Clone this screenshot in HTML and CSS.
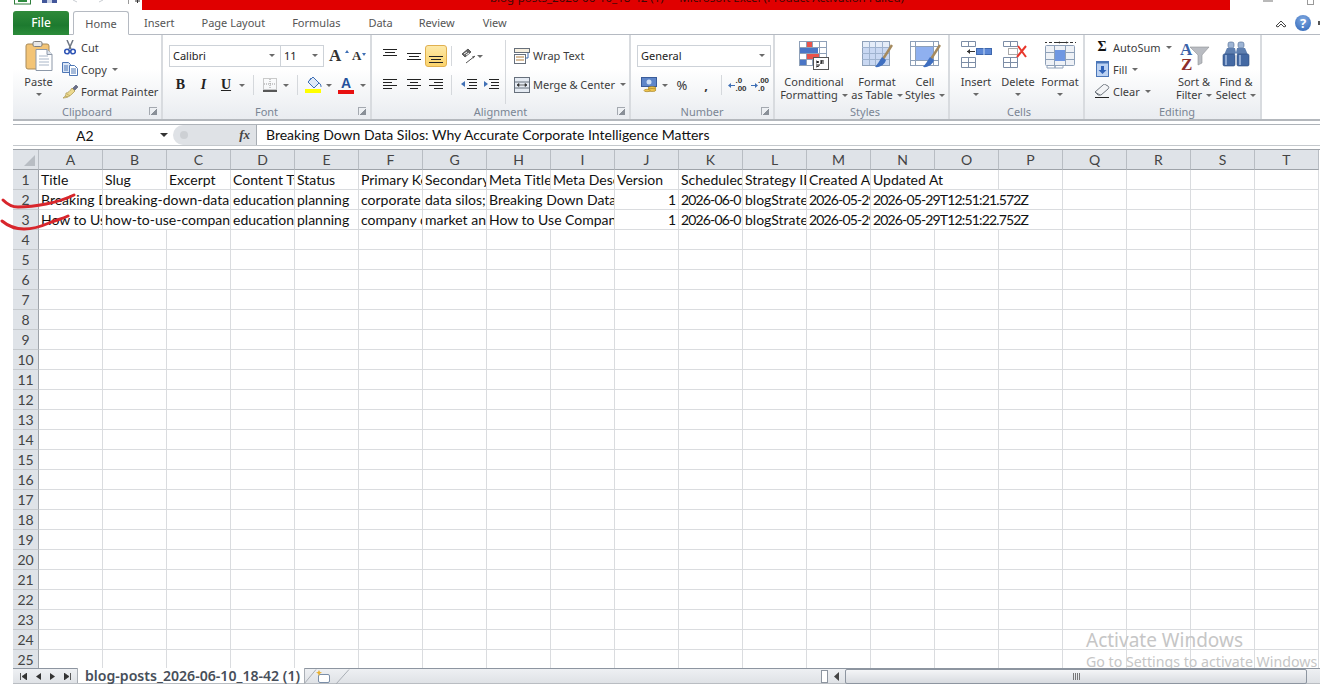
FILE: index.html
```html
<!DOCTYPE html>
<html lang="en">
<head>
    <meta charset="UTF-8">
    <title>blog-posts_2026-06-10_18-42 (1) - Microsoft Excel</title>
    <link rel="stylesheet" href="styles.css">
</head>
<body>
    <!-- title bar, cut off at the top of the capture -->
    <div class="titlebar">
        <div class="quick-access">
            <svg class="qa-excel" width="17" height="5"><rect x="0.5" y="-5" width="16" height="9" fill="#fff" stroke="#2f7d3b"/><rect x="4" y="-4" width="9" height="6" fill="#2e8b3e"/></svg>
            <svg class="qa-save" width="15" height="4"><rect width="15" height="3" fill="#43579a"/><rect x="5" width="5" height="3" fill="#c9d2e6"/></svg>
            <svg class="qa-undo" width="7" height="3"><path d="M1 0l4 2" stroke="#c9cdd2" fill="none"/></svg>
            <svg class="qa-redo" width="7" height="3"><path d="M6 0L2 2" stroke="#c9cdd2" fill="none"/></svg>
            <span class="qa-sep"></span>
            <svg class="qa-more" width="5" height="3"><path d="M0 1h5M2.500 0v3" stroke="#333"/></svg>
        </div>
        <div class="title-red"><span>blog-posts_2026-06-10_18-42 (1)&nbsp; -&nbsp; Microsoft Excel (Product Activation Failed)</span></div>
        <div class="win-controls">
            <span class="win-min"></span>
            <span class="win-max"></span>
        </div>
    </div>

    <!-- ribbon tabs -->
    <div class="tabs">
        <div class="tab-file">File</div>
        <div class="tab-home">Home</div>
        <div class="tab tab-insert">Insert</div>
        <div class="tab tab-layout">Page Layout</div>
        <div class="tab tab-formulas">Formulas</div>
        <div class="tab tab-data">Data</div>
        <div class="tab tab-review">Review</div>
        <div class="tab tab-view">View</div>
        <div class="tabs-right">
            <svg width="13" height="10"><path d="M1 8l5-5 5 5-2 1-3-3-3 3z" fill="#fff" stroke="#444"/></svg>
            <div class="help">?</div>
            <span class="help-edge"></span>
        </div>
    </div>

    <!-- ribbon -->
    <div class="ribbon">
        <div class="group group-clipboard">
            <div class="group-body">
                <div class="big-btn paste-btn">
                    <div class="big-icon">
                        <svg width="28" height="31" viewBox="0 0 28 31"><rect x="1" y="3" width="23" height="25" rx="2" fill="#f3c476" stroke="#a98a58"/><rect x="8" y="0.500" width="9" height="5" rx="1.500" fill="#e8e8e8" stroke="#7f7f7f"/><path d="M11 8.500h11l5 5v16H11z" fill="#fff" stroke="#8d98a8"/><path d="M22 8.500v5h5" fill="#dfe5ee" stroke="#8d98a8"/><path d="M14 15h9M14 18h10M14 21h10M14 24h10" stroke="#a9b6c8"/></svg>
                    </div>
                    <div class="big-text">Paste</div>
                    <i class="caret caret-line"></i>
                </div>
                <div class="small-col">
                    <div class="small-btn">
                        <span class="small-icon"><svg width="12" height="15" viewBox="0 0 12 15"><path d="M3 0l4 9M9 0L5 9" stroke="#6e7683" stroke-width="1.500" fill="none"/><circle cx="3" cy="11.500" r="2.300" fill="#fff" stroke="#2f55b5" stroke-width="1.600"/><circle cx="9" cy="11.500" r="2.300" fill="#fff" stroke="#2f55b5" stroke-width="1.600"/></svg></span>
                        <span>Cut</span>
                    </div>
                    <div class="small-btn">
                        <span class="small-icon"><svg width="16" height="14" viewBox="0 0 16 14"><path d="M.5.500h6l2 2v8h-8z" fill="#dbe6f6" stroke="#4d76b5"/><path d="M7.500 3.500h5l3 3v7h-8z" fill="#fff" stroke="#4d76b5"/><path d="M2 4h4M2 6h4M2 8h4M9 7h5M9 9h5M9 11h5" stroke="#4d76b5"/></svg></span>
                        <span>Copy</span><i class="caret"></i>
                    </div>
                    <div class="small-btn">
                        <span class="small-icon"><svg width="17" height="15" viewBox="0 0 17 15"><path d="M10 5l4-4 2 2-4 4z" fill="#6a6f8a" stroke="#4e5268" stroke-width=".6"/><path d="M10 4l3 3-3 3c-2 2-5 4-9 4 2-1 3-3 3-5 2 0 4-2 6-5z" fill="#ecd98f" stroke="#a8944e" stroke-width=".7"/><path d="M5 10l3 2M3 12l3 1" stroke="#a8944e" stroke-width=".6"/></svg></span>
                        <span>Format Painter</span>
                    </div>
                </div>
            </div>
            <div class="group-label">Clipboard</div>
            <i class="launcher"></i>
        </div>

        <div class="group group-font">
            <div class="group-body stack">
                <div class="row-top">
                    <div class="select font-name"><span>Calibri</span><i class="caret"></i></div>
                    <div class="select font-size"><span>11</span><i class="caret"></i></div>
                    <div class="grow-a">A<i></i></div>
                    <div class="shrink-a">A<i></i></div>
                </div>
                <div class="row-bottom font-tools">
                    <b class="fmt fmt-b">B</b>
                    <i class="fmt fmt-i">I</i>
                    <u class="fmt fmt-u">U</u>
                    <i class="caret"></i>
                    <span class="sep"></span>
                    <svg width="14" height="14"><rect x=".5" y=".5" width="13" height="11" fill="none" stroke="#999" stroke-dasharray="1 1"/><path d="M7 1v10M1 6h12" stroke="#999" stroke-dasharray="1 1"/><path d="M0 13h14" stroke="#222" stroke-width="1.500"/></svg>
                    <i class="caret"></i>
                    <span class="sep"></span>
                    <svg width="17" height="16" viewBox="0 0 17 16"><path d="M8 0l6 6-5 5-6-6z" fill="#dfe9f7" stroke="#3f6fb5"/><path d="M6 1L4 4M14 6c2 1 2 3 2 4" stroke="#3f6fb5" fill="none"/><rect y="12" width="16" height="4" fill="#ffff00"/></svg>
                    <i class="caret"></i>
                    <div class="color-a">A</div>
                    <i class="caret"></i>
                </div>
            </div>
            <div class="group-label">Font</div>
            <i class="launcher"></i>
        </div>

        <div class="group group-align">
            <div class="group-body split">
                <div class="align-left stack">
                    <div class="row-top align-tools">
                        <svg class="lines" width="14" height="14"><path d="M0 .5h14M2 3.500h10M0 6.500h14"/></svg>
                        <svg class="lines" width="14" height="14"><path d="M0 4.500h14M2 7.500h10M0 10.500h14"/></svg>
                        <div class="align-on"><svg class="lines" width="14" height="8"><path d="M0 1.500h14M2 4.500h10M0 7.500h14"/></svg></div>
                        <span class="sep"></span>
                        <div class="orient">
                            <svg width="16" height="16" viewBox="0 0 16 16"><path d="M1 6l6-5 3 3-6 5z" fill="#666" stroke="#333" stroke-width=".7"/><path d="M3 6l3-2M5 7l3-2" stroke="#fff"/><path d="M5 15l9-7" stroke="#555"/><path d="M14 8l-3 .5 1.500 2z" fill="#555"/></svg>
                            <i class="caret"></i>
                        </div>
                    </div>
                    <div class="row-bottom align-tools">
                        <svg class="lines" width="14" height="12"><path d="M0 .5h14M0 3.500h9M0 6.500h14M0 9.500h9"/></svg>
                        <svg class="lines" width="14" height="12"><path d="M0 .5h14M3 3.500h8M0 6.500h14M3 9.500h8"/></svg>
                        <svg class="lines" width="14" height="12"><path d="M0 .5h14M5 3.500h9M0 6.500h14M5 9.500h9"/></svg>
                        <span class="sep"></span>
                        <div class="indents">
                            <svg class="lines" width="16" height="14"><path d="M6 1.500h10M8 4.500h8M8 7.500h8M6 10.500h10"/><path class="arrow" d="M0 6l4-3v6z"/></svg>
                            <svg class="lines" width="16" height="14"><path d="M6 1.500h10M8 4.500h8M8 7.500h8M6 10.500h10"/><path class="arrow" d="M5 6L1 3v6z"/></svg>
                        </div>
                    </div>
                </div>
                <div class="align-right stack">
                    <div class="row-top wide-btn">
                        <svg width="16" height="16" viewBox="0 0 16 16"><rect x=".5" y=".5" width="15" height="4" fill="#f6efdf" stroke="#67707c"/><rect x=".5" y="6.500" width="11" height="9" fill="#fff" stroke="#67707c"/><path d="M2 9h8M2 12h8" stroke="#b07d3b"/><path d="M14 5v5h-2" fill="none" stroke="#3f6fb5"/></svg>
                        <span>Wrap Text</span>
                    </div>
                    <div class="row-bottom wide-btn">
                        <svg width="16" height="16" viewBox="0 0 16 16"><rect x=".5" y=".5" width="15" height="15" fill="#e5ebf3" stroke="#67707c"/><path d="M0 5h16M0 11h16" stroke="#67707c"/><path d="M3 8h10M3 8l2-1.500v3zM13 8l-2-1.500v3z" stroke="#333" fill="#333" stroke-width=".7"/></svg>
                        <span>Merge &amp; Center</span><i class="caret caret-merge"></i>
                    </div>
                </div>
            </div>
            <div class="group-label">Alignment</div>
            <i class="launcher"></i>
        </div>

        <div class="group group-number">
            <div class="group-body stack">
                <div class="row-top">
                    <div class="select number-format"><span>General</span><i class="caret"></i></div>
                </div>
                <div class="row-bottom number-tools">
                    <svg width="16" height="16" viewBox="0 0 16 16"><rect x=".5" y=".5" width="15" height="9" fill="#5f86c9" stroke="#3a5c9a"/><circle cx="8" cy="5" r="2.500" fill="#cfe0f6"/><ellipse cx="11" cy="11" rx="4" ry="1.500" fill="#efc44d" stroke="#9c7a20" stroke-width=".6"/><ellipse cx="11" cy="13" rx="4" ry="1.500" fill="#efc44d" stroke="#9c7a20" stroke-width=".6"/><ellipse cx="6" cy="13.500" rx="3" ry="1.200" fill="#efc44d" stroke="#9c7a20" stroke-width=".6"/></svg>
                    <i class="caret"></i>
                    <span class="num-sym">%</span>
                    <b class="num-sym">,</b>
                    <span class="sep"></span>
                    <div class="dec">
                        <svg width="7" height="7"><path class="arrow" d="M0 3.500L3 1v5z"/><path d="M3 3.500h4" stroke="#3f6fb5"/></svg>
                        <span>.0<br>.00</span>
                    </div>
                    <div class="dec">
                        <svg width="7" height="7"><path class="arrow" d="M7 3.500L4 1v5z"/><path d="M0 3.500h4" stroke="#3f6fb5"/></svg>
                        <span>.00<br>.0</span>
                    </div>
                </div>
            </div>
            <div class="group-label">Number</div>
            <i class="launcher"></i>
        </div>

        <div class="group group-styles">
            <div class="group-body">
                <div class="big-btn btn-cond">
                    <div class="big-icon">
                        <svg width="31" height="29" viewBox="0 0 31 29"><rect x=".5" y=".5" width="27" height="24" fill="#fff" stroke="#8ea0b8"/><path d="M0 6.500h27M0 12.500h27M0 18.500h27M7.500 0v24M13.500 0v24M20.500 0v24" stroke="#8ea0b8"/><rect x="8" y="1" width="5" height="5" fill="#e8534b"/><rect x="1" y="7" width="18" height="5" fill="#4a76c6"/><rect x="8" y="13" width="12" height="5" fill="#e8534b"/><rect x="1" y="19" width="6" height="5" fill="#4a76c6"/><rect x="14.500" y="16.500" width="15" height="12" fill="#fff" stroke="#555"/><path d="M17 20l3 1-3 1M17 24h4M23 19l-1 4M21 20h4M21 22h4M17 26l3-1" stroke="#222" fill="none"/></svg>
                    </div>
                    <div class="big-text">Conditional<br>Formatting<i class="caret"></i></div>
                </div>
                <div class="big-btn btn-table">
                    <div class="big-icon">
                        <svg width="31" height="29" viewBox="0 0 31 29"><rect x=".5" y=".5" width="27" height="24" fill="#c9d8f2" stroke="#8ea0b8"/><rect x="1" y="1" width="26" height="5" fill="#e5edf9"/><path d="M0 6.500h27M0 12.500h27M0 18.500h27M7.500 0v24M13.500 0v24M20.500 0v24" stroke="#9fb3cf"/><path d="M30 4l-9 14" stroke="#a58a5e" stroke-width="2.500"/><path d="M20 16c-2 3-5 8-7 10 5 1 10-3 11-7z" fill="#3f6fc0"/></svg>
                    </div>
                    <div class="big-text">Format<br>as Table<i class="caret"></i></div>
                </div>
                <div class="big-btn btn-cell">
                    <div class="big-icon">
                        <svg width="31" height="29" viewBox="0 0 31 29"><rect x=".5" y=".5" width="28" height="24" fill="#fff" stroke="#8ea0b8"/><path d="M0 5.500h28M0 19.500h28M5.500 0v24M23.500 0v24" stroke="#8ea0b8"/><rect x="6" y="6" width="17" height="13" fill="#8fb0ef"/><path d="M30 4l-9 14" stroke="#a58a5e" stroke-width="2.500"/><path d="M20 16c-2 3-5 8-7 10 5 1 10-3 11-7z" fill="#3f6fc0"/></svg>
                    </div>
                    <div class="big-text">Cell<br>Styles<i class="caret"></i></div>
                </div>
            </div>
            <div class="group-label">Styles</div>
        </div>

        <div class="group group-cells">
            <div class="group-body">
                <div class="big-btn">
                    <div class="big-icon">
                        <svg width="31" height="27" viewBox="0 0 31 27"><path d="M.5.500h14v5H.5zM.5 16.500h14v10H.5zM.5 21.500h14M7.500 16v11M7.500 0v6" fill="#fff" stroke="#7c8da6"/><rect x="15.500" y="7.500" width="15" height="6" fill="#5b87d6" stroke="#3f68ad"/><path d="M23 7v7" stroke="#cfe0f6"/><path d="M6 10.500h8" stroke="#333"/><path d="M6 10.500l3-2.500v5z" fill="#333"/></svg>
                    </div>
                    <div class="big-text">Insert</div>
                    <i class="caret caret-line"></i>
                </div>
                <div class="big-btn">
                    <div class="big-icon">
                        <svg width="31" height="27" viewBox="0 0 31 27"><path d="M.5.500h14v5H.5zM.5 16.500h14v10H.5zM.5 21.500h14M7.500 16v11M7.500 0v6" fill="#fff" stroke="#7c8da6"/><rect x="5.500" y="7.500" width="9" height="6" fill="#fff" stroke="#555" stroke-dasharray="1 1"/><path d="M15 5l8 11M23 5l-9 11" stroke="#e8372c" stroke-width="2"/></svg>
                    </div>
                    <div class="big-text">Delete</div>
                    <i class="caret caret-line"></i>
                </div>
                <div class="big-btn">
                    <div class="big-icon">
                        <svg width="31" height="28" viewBox="0 0 31 28"><path d="M0 1.500h2M4 1.500h3M9 1.500h14M25 1.500h3M30 1.500h1" stroke="#333"/><path d="M12 1.500l3-1v2zM24 1.500l-3-1v2z" fill="#333"/><rect x=".5" y="4.500" width="29" height="20" rx="1" fill="#eef1f6" stroke="#8ea0b8"/><path d="M0 11.500h29M0 18.500h29M9.500 4v20M20.500 4v20" stroke="#8ea0b8"/><rect x="10" y="9" width="10" height="11" fill="#6f97e2"/><path d="M2 25v2h8v-2M10 25v2h8v-2" fill="none" stroke="#8ea0b8"/></svg>
                    </div>
                    <div class="big-text">Format</div>
                    <i class="caret caret-line"></i>
                </div>
            </div>
            <div class="group-label">Cells</div>
        </div>

        <div class="group group-editing">
            <div class="group-body">
                <div class="small-col edit-col">
                    <div class="small-btn">
                        <span class="small-icon sigma">Σ</span>
                        <span>AutoSum</span><i class="caret"></i>
                    </div>
                    <div class="small-btn">
                        <span class="small-icon"><svg width="13" height="16" viewBox="0 0 13 16"><rect x=".5" y=".5" width="12" height="15" fill="#bcd2f2" stroke="#4a76b8"/><path d="M.5.500h12v2H.5z" fill="#4a76b8"/><path d="M5 5h3v4h2.500l-4 4-4-4H5z" fill="#2f62b8"/></svg></span>
                        <span>Fill</span><i class="caret"></i>
                    </div>
                    <div class="small-btn">
                        <span class="small-icon"><svg width="16" height="14" viewBox="0 0 16 14"><path d="M1 8l8-7c1-1 2-1 3 0l2 1c1 1 1 2 0 3l-7 6H4z" fill="#f3f4f6" stroke="#717880"/><path d="M1 8l5 3" stroke="#717880"/><path d="M1 13.500h14" stroke="#222"/></svg></span>
                        <span>Clear</span><i class="caret"></i>
                    </div>
                </div>
                <div class="big-btn btn-sort">
                    <div class="big-icon">
                        <svg width="31" height="30" viewBox="0 0 31 30"><path d="M11 6h19l-7 8v8l-4 2V14z" fill="#b9bcc2" stroke="#8e9196" stroke-width=".6"/><text x="1" y="14" class="sort-a">A</text><text x="2" y="29" class="sort-z">Z</text></svg>
                    </div>
                    <div class="big-text">Sort &amp;<br>Filter<i class="caret"></i></div>
                </div>
                <div class="big-btn btn-find">
                    <div class="big-icon">
                        <svg width="28" height="26" viewBox="0 0 28 26"><rect x="6" y="1" width="6" height="6" rx="2" fill="#9db4d4" stroke="#4d6890" stroke-width=".6"/><rect x="16" y="1" width="6" height="6" rx="2" fill="#9db4d4" stroke="#4d6890" stroke-width=".6"/><path d="M5 7h8l1 5-2 2H2z" fill="#5e7fb0"/><path d="M15 7h8l3 7H16l-2-2z" fill="#5e7fb0"/><rect x="1" y="13" width="12" height="12" rx="1.500" fill="#4469a3" stroke="#2c4a7c" stroke-width=".6"/><rect x="15" y="13" width="12" height="12" rx="1.500" fill="#4469a3" stroke="#2c4a7c" stroke-width=".6"/><path d="M4 14v10M18 14v10" stroke="#a7bfe2" stroke-width="1.500"/></svg>
                    </div>
                    <div class="big-text">Find &amp;<br>Select<i class="caret"></i></div>
                </div>
            </div>
            <div class="group-label">Editing</div>
        </div>
    </div>

    <!-- formula bar -->
    <div class="formula-bar">
        <div class="name-box"><span>A2</span><i class="caret"></i></div>
        <div class="fx-box">
            <span class="fx-knob"></span>
            <span class="fx">fx</span>
        </div>
        <div class="formula-input">Breaking Down Data Silos: Why Accurate Corporate Intelligence Matters</div>
    </div>

    <!-- sheet -->
    <div class="sheet">
        <table id="grid" class="grid"></table>
        <div class="watermark">
            <div class="wm-big">Activate Windows</div>
            <div class="wm-small">Go to Settings to activate Windows</div>
        </div>
    </div>

    <!-- sheet tabs and horizontal scrollbar -->
    <div class="tabbar">
        <div class="tab-nav">
            <svg width="7" height="7"><path d="M.5 0v7M7 0L2 3.500 7 7z" stroke="#333" fill="#333" stroke-width=".8"/></svg>
            <svg width="5" height="7"><path d="M5 0L0 3.500 5 7z" fill="#333"/></svg>
            <svg width="5" height="7"><path d="M0 0l5 3.500L0 7z" fill="#333"/></svg>
            <svg width="7" height="7"><path d="M6.500 0v7M0 0l5 3.500L0 7z" stroke="#333" fill="#333" stroke-width=".8"/></svg>
        </div>
        <div class="sheet-tab">blog-posts_2026-06-10_18-42 (1)</div>
        <svg class="new-tab" width="48" height="15" viewBox="0 0 48 15"><path d="M0 15L12 .5M32 15L45 .5" fill="none" stroke="#a9aeb5"/><rect x="14.500" y="5.500" width="11" height="8" rx="1.500" fill="#fff" stroke="#7a8ea8"/><path d="M15 1l1 2 2 .5-2 1-1 2.500-1-2.500-2-1 2-.5z" fill="#eab12f"/></svg>
        <div class="hscroll">
            <div class="splitter"></div>
            <svg class="scroll-left" width="5" height="9"><path d="M5 0L0 4.500 5 9z" fill="#444"/></svg>
            <div class="thumb"><span class="grip"></span></div>
        </div>
    </div>

    <!-- red pen marks over the row numbers -->
    <svg class="pen-marks" width="90" height="60" viewBox="0 0 90 60">
        <path d="M3 8c4 4 8 7 15 7 9 0 18-1 28-3 10-2 20-5 28-9"/>
        <path d="M2 29c6 5 12 8 22 8 8 0 16-2 25-6 7-3 13-4 19-7"/>
    </svg>

    <script>
        // 表を組み立てる (null = 左のセルの文字がはみ出す列)
        const columns = 'ABCDEFGHIJKLMNOPQRST'.split('');
        const rowCount = 26;
        const stampColumns = ['K', 'M', 'N'];
        const cells = {
            1: ['Title', 'Slug', 'Excerpt', 'Content Type', 'Status', 'Primary Keyword', 'Secondary Keywords', 'Meta Title', 'Meta Description', 'Version', 'Scheduled At', 'Strategy ID', 'Created At', 'Updated At', null],
            2: ['Breaking Down Data Silos', 'breaking-down-data-silos', null, 'educational', 'planning', 'corporate intelligence', 'data silos; intelligence', 'Breaking Down Data Silos', null, 1, '2026-06-01', 'blogStrategy', '2026-05-29', '2026-05-29T12:51:21.572Z', null, null],
            3: ['How to Use Company Data', 'how-to-use-company-data', null, 'educational', 'planning', 'company data', 'market analysis', 'How to Use Company Data', null, 1, '2026-06-01', 'blogStrategy', '2026-05-29', '2026-05-29T12:51:22.752Z', null, null]
        };

        let html = '<tr><th class="corner"><i></i></th>';
        columns.forEach(col => { html += `<th>${col}</th>`; });
        html += '</tr>';

        for (let r = 1; r < rowCount; r++) {
            const row = cells[r] || [];
            html += `<tr><th class="row-head">${r}</th>`;
            columns.forEach((col, i) => {
                if (row[i] === null) return;
                const value = row[i] === undefined ? '' : row[i];
                let span = 1;
                while (row[i + span] === null) span++;
                let cls = '';
                if (typeof value === 'number') cls = 'num';
                else if (r > 1 && stampColumns.includes(col)) cls = 'stamp';
                html += `<td class="${cls}" colspan="${span}"><div>${value}</div></td>`;
            });
            html += '</tr>';
        }
        document.getElementById('grid').innerHTML = html;
    </script>
</body>
</html>
```

FILE: styles.css
```css
* {
    box-sizing: border-box;
    margin: 0;
    padding: 0;
}

body {
    width: 1320px;
    height: 686px;
    overflow: hidden;
    background-color: #fff;
    font-family: "Noto Sans", Arial, sans-serif;
    font-size: 11px;
    color: #3c3c3c;
    position: relative;
}

svg {
    display: block;
    flex: none;
}

/* title bar */
.titlebar {
    height: 11px;
    display: flex;
    overflow: hidden;
}

.quick-access {
    width: 142px;
    display: flex;
    align-items: flex-start;
    padding-left: 14px;
}

.qa-save { margin-left: 11px; }
.qa-undo { margin-left: 15px; }
.qa-redo { margin-left: 18px; }

.qa-sep {
    width: 1px;
    height: 4px;
    margin-left: 24px;
    background-color: #999;
}

.qa-more { margin-left: 6px; }

.title-red {
    width: 1088px;
    height: 10px;
    background-color: #e00000;
    padding-left: 348px;
    overflow: hidden;
}

.title-red span {
    display: block;
    margin-top: -11px;
    font-size: 11.500px;
    line-height: 18px;
    color: #3c0808;
    white-space: nowrap;
}

.win-controls {
    flex: 1;
    position: relative;
}

.win-min {
    display: block;
    width: 10px;
    height: 2px;
    margin: 0 0 0 33px;
    background-color: #b9b9b9;
}

.win-max {
    position: absolute;
    left: 77px;
    top: -2px;
    width: 7px;
    height: 7px;
    border: 1px solid #999;
}

/* ribbon tabs */
.tabs {
    height: 24px;
    margin-left: 13px;
    display: flex;
    position: relative;
    border-bottom: 1px solid #b5bac2;
}

.tab-file {
    width: 56px;
    height: 24px;
    border-radius: 3px 3px 0 0;
    background: linear-gradient(#2f8a3a, #1d7a2f 60%, #2b8c3a);
    color: #fff;
    font-size: 12px;
    font-weight: 500;
    line-height: 24px;
    text-align: center;
}

.tab-home {
    width: 56px;
    height: 24px;
    margin-left: 4px;
    background-color: #fff;
    border: 1px solid #b5bac2;
    border-bottom-color: #fff;
    border-radius: 3px 3px 0 0;
    line-height: 23px;
    text-align: center;
    color: #555;
}

.tab {
    line-height: 24px;
    color: #555;
}

.tab-insert { margin-left: 15px; }
.tab-layout { margin-left: 27px; }
.tab-formulas { margin-left: 27px; }
.tab-data { margin-left: 28px; }
.tab-review { margin-left: 26px; }
.tab-view { margin-left: 28px; }

.tabs-right {
    margin-left: auto;
    display: flex;
    align-items: center;
    gap: 7px;
}

.help {
    width: 16px;
    height: 16px;
    border-radius: 50%;
    background: radial-gradient(circle at 50% 30%, #7fa8e0, #2f66b8);
    color: #fff;
    font-size: 13px;
    font-weight: 700;
    line-height: 16px;
    text-align: center;
}

.help-edge {
    width: 2px;
    height: 4px;
    background-color: #555;
}

/* ribbon */
.ribbon {
    height: 86px;
    margin-left: 13px;
    display: flex;
    border-bottom: 2px solid #b4b8bd;
}

.group {
    position: relative;
    display: flex;
    flex-direction: column;
    flex: none;
    background: linear-gradient(#fff 40%, #e9ecf0);
    border-right: 2px solid #d8dbdf;
}

.group-clipboard { width: 150px; }
.group-font { width: 209px; }
.group-align { width: 259px; }
.group-number { width: 144px; }
.group-styles { width: 175px; padding-left: 7px; }
.group-cells { width: 135px; padding-left: 5px; }
.group-editing { width: 177px; padding-left: 9px; }

.group-body {
    flex: 1;
    display: flex;
    padding-top: 2px;
}

.group-body.split {
    padding-top: 0;
}

.stack {
    display: flex;
    flex-direction: column;
}

.group-body.stack,
.align-left {
    padding-top: 10px;
    padding-left: 6px;
}

.group-label {
    height: 15px;
    line-height: 15px;
    text-align: center;
    color: #7a8594;
}

.launcher {
    position: absolute;
    right: 4px;
    bottom: 4px;
    width: 8px;
    height: 8px;
    border: 1px solid #a4a9b0;
    border-width: 1px 0 0 1px;
    background: linear-gradient(135deg, transparent 55%, #8a9098 55%);
}

.caret {
    display: inline-block;
    width: 0;
    height: 0;
    flex: none;
    border: 3px solid transparent;
    border-top: 3px solid #6a6a6a;
    border-bottom: 0;
}

.caret-line {
    display: block;
    margin-top: 5px;
}

/* large buttons */
.big-btn {
    display: flex;
    flex-direction: column;
    align-items: center;
    flex: none;
    width: 42px;
}

.big-icon {
    height: 38px;
    padding-top: 4px;
}

.big-text {
    line-height: 13px;
    text-align: center;
    white-space: nowrap;
}

.big-text .caret {
    margin-left: 4px;
    vertical-align: 2px;
}

.paste-btn {
    width: 49px;
    margin-left: 1px;
}

.btn-cond { width: 64px; }
.btn-table { width: 62px; }
.btn-cell { width: 34px; }

/* small buttons */
.small-col {
    display: flex;
    flex-direction: column;
    margin-top: -1px;
}

.group-clipboard .small-col {
    margin-left: -1px;
}

.edit-col {
    width: 79px;
}

.small-btn {
    height: 22px;
    display: flex;
    align-items: center;
    white-space: nowrap;
}

.small-btn .caret {
    margin-left: 5px;
}

.small-icon {
    width: 19px;
    padding-right: 3px;
    display: flex;
    justify-content: center;
}

.sigma {
    font-family: "Liberation Serif", serif;
    font-size: 14px;
    font-weight: 700;
    color: #111;
}

/* rows in font, alignment and number */
.row-top {
    height: 22px;
    display: flex;
    align-items: center;
}

.row-bottom {
    height: 22px;
    margin-top: 7px;
    align-items: center;
}

.select {
    height: 22px;
    display: flex;
    align-items: center;
    justify-content: space-between;
    padding: 0 5px 1px 3px;
    border: 1px solid #cdd2d8;
    background-color: #fff;
    color: #222;
}

.font-name { width: 112px; }
.font-size { width: 43px; border-left: 0; }
.number-format { width: 134px; }

.grow-a,
.shrink-a {
    position: relative;
    font-family: "Liberation Serif", serif;
    font-weight: 700;
    color: #333;
}

.grow-a { font-size: 17px; margin-left: 5px; width: 23px; }
.shrink-a { font-size: 13px; width: 14px; }

.grow-a i,
.shrink-a i {
    position: absolute;
    top: 4px;
    right: 3px;
    border: 2.500px solid transparent;
    border-bottom: 3px solid #3f6fb5;
    border-top: 0;
}

.shrink-a i {
    right: 0;
    top: 5px;
    border-bottom: 0;
    border-top: 3px solid #3f6fb5;
}

.font-tools {
    display: grid;
    grid-template-columns: 23px 23px 22px 10px 12px 22px 10px 12px 21px 10px 24px 10px;
    justify-items: center;
}

.fmt {
    font-family: "Liberation Serif", serif;
    font-size: 14px;
    font-weight: 700;
    color: #222;
}

.fmt-i {
    font-style: italic;
}

.sep {
    width: 1px;
    height: 20px;
    background-color: #d5d8dc;
}

.color-a {
    width: 16px;
    height: 17px;
    border-bottom: 4px solid #e81010;
    font-family: "Liberation Sans", sans-serif;
    font-size: 14px;
    font-weight: 700;
    line-height: 13px;
    color: #24509c;
    text-align: center;
}

/* alignment */
.group-body.split {
    display: flex;
}

.align-left {
    width: 133px;
}

.align-right {
    flex: 1;
    padding-left: 8px;
    margin-top: 5px;
    padding-top: 5px;
    border-left: 1px solid #d5d8dc;
}

.align-tools {
    display: grid;
    grid-template-columns: 24px 23px 22px 8px 50px;
    justify-items: center;
}

.lines path {
    stroke: #222;
    fill: none;
}

.lines path.arrow,
.dec path.arrow {
    stroke: none;
    fill: #3f6fb5;
}

.align-on {
    width: 22px;
    height: 22px;
    display: flex;
    align-items: flex-end;
    justify-content: center;
    padding-bottom: 3px;
    border: 1px solid #e0b050;
    border-radius: 3px;
    background: linear-gradient(#fde9a8, #fbd36b);
}

.orient,
.indents {
    justify-self: start;
    display: flex;
    align-items: center;
    padding-left: 6px;
}

.indents {
    gap: 6px;
}

.wide-btn {
    gap: 3px;
    padding-bottom: 1px;
    white-space: nowrap;
    display: flex;
}

.wide-btn svg {
    margin-bottom: -1px;
}

.caret-merge {
    margin-left: 2px;
}

/* number */
.number-tools {
    display: grid;
    grid-template-columns: 23px 9px 26px 22px 8px 25px 20px;
    justify-items: center;
}

.num-sym {
    font-size: 13px;
    color: #333;
}

.dec {
    display: flex;
    align-items: center;
}

.dec span {
    font-family: "Liberation Sans", sans-serif;
    font-size: 8px;
    font-weight: 700;
    line-height: 8px;
    color: #333;
}

/* formula bar */
.formula-bar {
    height: 22px;
    margin: 3px 0 0 13px;
    display: flex;
    border-top: 1px solid #aeb3b9;
    border-bottom: 1px solid #c4c8cc;
    font-family: Lato, sans-serif;
    font-size: 14px;
    color: #111;
}

.name-box {
    width: 160px;
    display: flex;
    align-items: center;
    background-color: #fff;
}

.name-box span {
    margin-left: 63px;
    width: 84px;
}

.name-box .caret {
    border-width: 4px;
    border-top-color: #333;
    border-bottom: 0;
}

.fx-box {
    width: 84px;
    position: relative;
    background-color: #dfe2e6;
    border-radius: 10px 0 0 10px;
    border-right: 1px solid #a8adb3;
}

.fx-knob {
    position: absolute;
    left: 7px;
    top: 6px;
    width: 8px;
    height: 8px;
    border-radius: 50%;
    background-color: #cdd0d4;
}

.fx {
    position: absolute;
    right: 6px;
    top: 0;
    font-family: "Liberation Serif", serif;
    font-style: italic;
    font-weight: 700;
    font-size: 13px;
    line-height: 19px;
    color: #444;
}

.formula-input {
    flex: 1;
    padding-left: 9px;
    line-height: 19px;
    background-color: #fff;
    white-space: nowrap;
}

/* sheet */
.sheet {
    height: 519px;
    margin: 3px 0 0 13px;
    overflow: hidden;
    position: relative;
    border-top: 1px solid #9ea3a9;
}

.grid {
    table-layout: fixed;
    width: 1306px;
    border-collapse: separate;
    border-spacing: 0;
    font-family: Lato, sans-serif;
    font-size: 14px;
    color: #111;
}

.grid tr {
    height: 20px;
}

.grid th {
    width: 64px;
    height: 19px;
    background-color: #dfe3e8;
    border-right: 1px solid #b8bdc3;
    border-bottom: 1px solid #9ea3a9;
    font-weight: 400;
    color: #444;
    text-align: center;
}

.grid th.corner,
.grid th.row-head {
    width: 26px;
    position: relative;
}

.grid th.row-head {
    height: 20px;
    border-right: 1px solid #9ea3a9;
    border-bottom: 1px solid #c6cace;
}

.corner i {
    position: absolute;
    right: 3px;
    bottom: 3px;
    border-style: solid;
    border-width: 0 0 11px 11px;
    border-color: transparent transparent #b8bdc3 transparent;
}

.grid td {
    height: 20px;
    padding: 0;
    border-right: 1px solid #dadcdf;
    border-bottom: 1px solid #dadcdf;
}

.grid td div {
    height: 19px;
    line-height: 19px;
    padding-left: 2px;
    overflow: hidden;
    white-space: nowrap;
}

.grid td.num div {
    text-align: right;
    padding-right: 2px;
}

/* Lato's digits are wider than the sheet's */
.grid td.stamp div {
    letter-spacing: -0.850px;
}

.watermark {
    position: absolute;
    left: 1073px;
    top: 478px;
    white-space: nowrap;
    color: #c6c6c6;
}

.wm-big {
    font-size: 19px;
    line-height: 24px;
}

.wm-small {
    font-size: 14.200px;
    line-height: 20px;
}

/* sheet tabs */
.tabbar {
    height: 16px;
    margin-left: 13px;
    display: flex;
    position: relative;
    background: linear-gradient(#eef0f3, #dfe2e6);
    border-top: 1px solid #8d95a0;
    border-bottom: 1px solid #b9bdc2;
}

.tab-nav {
    width: 64px;
    display: flex;
    align-items: center;
    gap: 9px;
    padding-left: 7px;
}

.sheet-tab {
    width: 228px;
    margin-top: -1px;
    padding-left: 7px;
    background-color: #fff;
    border-left: 1px solid #a9aeb5;
    border-right: 1px solid #a9aeb5;
    font-size: 14.100px;
    font-weight: 600;
    line-height: 16px;
    color: #474f5a;
    white-space: nowrap;
}

.new-tab {
    margin-left: -1px;
}

.hscroll {
    flex: 1;
    display: flex;
    align-items: center;
}

.splitter {
    width: 7px;
    height: 13px;
    margin-left: 469px;
    background-color: #fff;
    border: 1px solid #8d95a0;
}

.scroll-left {
    margin-left: 6px;
}

.thumb {
    width: 462px;
    height: 15px;
    margin-left: 6px;
    display: flex;
    align-items: center;
    justify-content: center;
    border: 1px solid #8d95a0;
    border-radius: 2px;
    background: linear-gradient(#f4f5f7, #d8dbe0);
}

.grip {
    width: 7px;
    height: 7px;
    background: repeating-linear-gradient(90deg, #777 0 1px, transparent 1px 2px);
}

/* pen marks */
.pen-marks {
    position: absolute;
    left: 0;
    top: 192px;
}

.pen-marks path {
    fill: none;
    stroke: #d8262c;
    stroke-width: 3px;
    stroke-linecap: round;
}

.sort-a,
.sort-z {
    font-family: "Liberation Serif", serif;
    font-size: 17px;
    font-weight: 700;
}

.sort-a { fill: #3b62a8; }
.sort-z { fill: #8c2e2a; }
```
